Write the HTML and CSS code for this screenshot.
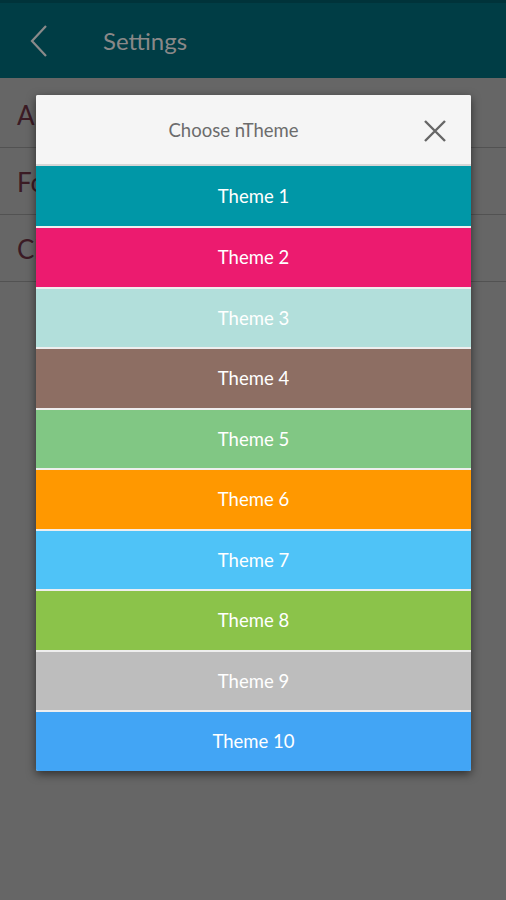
FILE: index.html
```html
<!DOCTYPE html>
<html>
<head>
<meta charset="utf-8">
<link rel="stylesheet" href="styles.css">
</head>
<body>
<div class="app">
  <header class="topbar">
    <svg class="back" width="20" height="34" viewBox="0 0 20 34"><path d="M17 2 L3 17 L17 32" fill="none" stroke="#8a8a8a" stroke-width="2.2"/></svg>
    <span class="title">Settings</span>
  </header>
  <ul class="list">
    <li>Appearance</li>
    <li>Font size</li>
    <li>Clear data</li>
  </ul>
</div>
<div class="overlay"></div>
<div class="modal">
  <div class="modal-head">
    <span class="modal-title">Choose nTheme</span>
    <svg class="close" width="24" height="24" viewBox="0 0 24 24"><path d="M2 2 L22 22 M22 2 L2 22" stroke="#666" stroke-width="2.4" fill="none"/></svg>
  </div>
  <div class="row t1">Theme 1</div>
  <div class="row t2">Theme 2</div>
  <div class="row t3">Theme 3</div>
  <div class="row t4">Theme 4</div>
  <div class="row t5">Theme 5</div>
  <div class="row t6">Theme 6</div>
  <div class="row t7">Theme 7</div>
  <div class="row t8">Theme 8</div>
  <div class="row t9">Theme 9</div>
  <div class="row t10">Theme 10</div>
</div>
</body>
</html>
```
FILE: styles.css
```css
html, body {
  margin: 0;
  padding: 0;
  width: 506px;
  height: 900px;
  overflow: hidden;
  font-family: Lato, "Open Sans", sans-serif;
}
.app {
  width: 506px;
  height: 900px;
  background: #ffffff;
}
.topbar {
  height: 78px;
  background: #003d45;
  border-top: 3px solid #00333a;
  box-sizing: border-box;
  display: flex;
  align-items: center;
  padding-left: 29px;
}
.back { margin-right: 54px; margin-top: 1px; }
.topbar .title {
  color: #8a8888;
  font-size: 24px;
}
.list {
  list-style: none;
  margin: 0;
  padding: 3px 0 0 0;
}
.list li {
  height: 66px;
  border-bottom: 1px solid #cccccc;
  display: flex;
  align-items: center;
  padding-left: 17px;
  font-size: 26px;
  color: #93455b;
  box-sizing: border-box;
  margin-top: 1px;
}
.overlay {
  position: absolute;
  left: 0; top: 78px;
  width: 506px;
  height: 822px;
  background: rgba(0, 0, 0, 0.6);
}
.modal {
  position: absolute;
  left: 36px;
  top: 95px;
  width: 435px;
  background: #eeeeee;
  box-shadow: 0 3px 10px rgba(0,0,0,0.55);
  border-radius: 2px;
  overflow: hidden;
}
.modal-head {
  height: 69px;
  background: #f5f5f5;
  display: flex;
  align-items: center;
  justify-content: center;
  position: relative;
  padding-right: 40px;
  border-bottom: 2px solid #d6d6d6;
}
.modal-title {
  color: #6c6c6c;
  font-size: 18.5px;
}
.close {
  position: absolute;
  right: 24px;
  top: 24px;
}
.row {
  height: 58.5px;
  margin-top: 2px;
  display: flex;
  align-items: center;
  justify-content: center;
  color: #ffffff;
  font-size: 18.5px;
}
.modal-head + .row { margin-top: 0; height: 60px; }
.t1 { background: #0097a7; }
.t2 { background: #ec1b6f; }
.t3 { background: #b2dfdb; }
.t4 { background: #8d6e63; }
.t5 { background: #81c784; }
.t6 { background: #ff9800; }
.t7 { background: #4fc3f7; }
.t8 { background: #8bc34a; }
.t9 { background: #bdbdbd; }
.t10 { background: #42a5f5; }
```
